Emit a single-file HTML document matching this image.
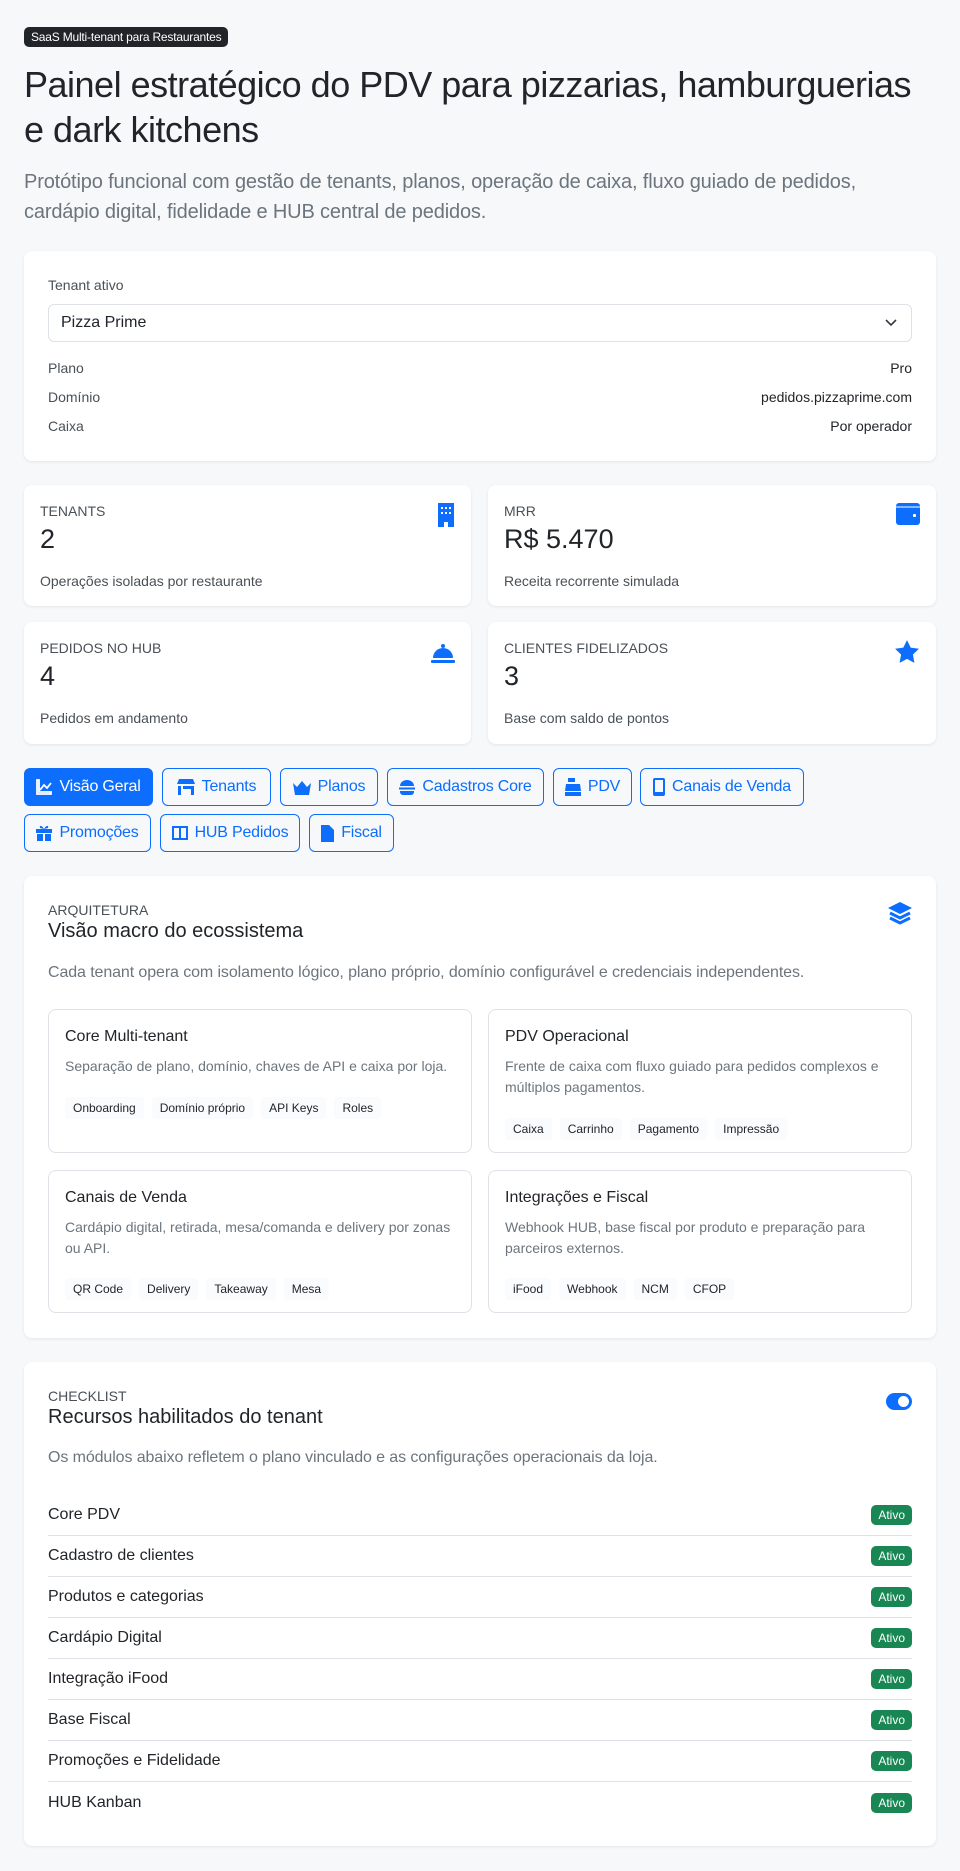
<!DOCTYPE html>
<html><head><meta charset="utf-8"><style>
*{box-sizing:border-box;margin:0;padding:0}
body{width:960px;height:1871px;background:#f6f8fa;font-family:"Liberation Sans",sans-serif;color:#212529;position:relative;overflow:hidden}
.abs{position:absolute}
.card{position:absolute;background:#fff;border-radius:8px;box-shadow:0 1px 3px rgba(0,0,0,.08)}
.badge{left:24px;top:27px;height:20px;padding:0 7px;background:#212529;color:#fff;font-size:12px;line-height:20px;border-radius:5px;letter-spacing:-.2px}
h1{position:absolute;left:24px;top:62px;font-size:36px;font-weight:400;line-height:45px;width:908px;letter-spacing:-.5px}
.lead{position:absolute;left:24px;top:167px;font-size:20px;line-height:30px;color:#6c757d;width:900px;letter-spacing:-.15px}
.lbl{font-size:14px;color:#495057}
.row{position:absolute;left:24px;right:24px;font-size:14px;display:flex;justify-content:space-between;color:#212529}
.row span:first-child{color:#495057}
.stat .t{position:absolute;left:16px;top:18px;font-size:14px;color:#495057}
.stat .v{position:absolute;left:16px;top:38px;font-size:27px;line-height:32px}
.stat .d{position:absolute;left:16px;top:88px;font-size:14px;color:#495057}
.stat svg{position:absolute;right:16px;top:18px}
.tab{position:absolute;height:38px;border:1px solid #0d6efd;border-radius:6px;color:#0d6efd;font-size:16px;line-height:36px;display:flex;align-items:center;justify-content:center;gap:7px;letter-spacing:-.2px}
.tab.on{background:#0d6efd;color:#fff}
.tab svg{fill:currentColor}
.sub{position:absolute;border:1px solid #dee2e6;border-radius:8px;background:#fff}
.sub h5{position:absolute;left:16px;top:18px;font-size:16px;font-weight:400}
.sub p{position:absolute;left:16px;top:46px;right:16px;font-size:14px;line-height:21px;color:#6c757d}
.chips{position:absolute;left:16px;display:flex;gap:8px}
.chips span{font-size:12px;background:#fafbfc;padding:2px 8px;line-height:18px;border-radius:4px}
.sec .k{position:absolute;left:24px;font-size:14px;color:#495057}
.sec .h{position:absolute;left:24px;font-size:20px}
.sec .p{position:absolute;left:24px;font-size:16px;color:#6c757d;letter-spacing:-.1px}
.li{position:absolute;left:24px;right:24px;height:41px;border-bottom:1px solid #dee2e6;display:flex;justify-content:space-between;align-items:center;font-size:16px}
.li b{font-weight:400;background:#198754;color:#fff;font-size:12px;padding:0 7px;line-height:20px;border-radius:5px}
</style></head><body>
<div class="abs badge">SaaS Multi-tenant para Restaurantes</div>
<h1>Painel estratégico do PDV para pizzarias, hamburguerias e dark kitchens</h1>
<div class="lead">Protótipo funcional com gestão de tenants, planos, operação de caixa, fluxo guiado de pedidos, cardápio digital, fidelidade e HUB central de pedidos.</div>

<div class="card" style="left:24px;top:251px;width:912px;height:210px">
 <div class="abs lbl" style="left:24px;top:26px">Tenant ativo</div>
 <div class="abs" style="left:24px;top:53px;width:864px;height:38px;border:1px solid #dee2e6;border-radius:6px;font-size:16px;line-height:36px;padding-left:12px">Pizza Prime
  <svg class="abs" style="right:14px;top:13px" width="12" height="10" viewBox="0 0 12 10"><path d="M1 2l5 5 5-5" fill="none" stroke="#343a40" stroke-width="1.6"/></svg></div>
 <div class="row" style="top:109px"><span>Plano</span><span>Pro</span></div>
 <div class="row" style="top:138px"><span>Domínio</span><span>pedidos.pizzaprime.com</span></div>
 <div class="row" style="top:167px"><span>Caixa</span><span>Por operador</span></div>
</div>

<div class="card stat" style="left:24px;top:485px;width:447px;height:121px"><div class="t">TENANTS</div><div class="v">2</div><div class="d">Operações isoladas por restaurante</div>
<svg width="18" height="24" viewBox="0 0 18 24"><path d="M1 0h16v24h-6v-5H7v5H1z" fill="#0d6efd"/><g fill="#fff"><rect x="4" y="4" width="2" height="2"/><rect x="8" y="4" width="2" height="2"/><rect x="12" y="4" width="2" height="2"/><rect x="4" y="9" width="2" height="2"/><rect x="8" y="9" width="2" height="2"/><rect x="12" y="9" width="2" height="2"/></g></svg></div>
<div class="card stat" style="left:488px;top:485px;width:448px;height:121px"><div class="t">MRR</div><div class="v">R$ 5.470</div><div class="d">Receita recorrente simulada</div>
<svg width="24" height="22" viewBox="0 0 24 22"><rect x="0" y="0" width="24" height="22" rx="3" fill="#0d6efd"/><path d="M0 4h24" stroke="#fff" stroke-width="1"/><rect x="17" y="11" width="3" height="3" rx="1" fill="#fff"/></svg></div>
<div class="card stat" style="left:24px;top:622px;width:447px;height:122px"><div class="t">PEDIDOS NO HUB</div><div class="v">4</div><div class="d">Pedidos em andamento</div>
<svg width="24" height="20" viewBox="0 0 24 20" style="top:22px"><circle cx="12" cy="2" r="2" fill="#0d6efd"/><path d="M2 14a10 10 0 0 1 20 0z" fill="#0d6efd"/><rect x="0" y="16" width="24" height="3" rx="1" fill="#0d6efd"/></svg></div>
<div class="card stat" style="left:488px;top:622px;width:448px;height:122px"><div class="t">CLIENTES FIDELIZADOS</div><div class="v">3</div><div class="d">Base com saldo de pontos</div>
<svg width="26" height="26" viewBox="0 0 24 24" style="top:17px"><path d="M12 1l3.4 7 7.6 1-5.5 5.3 1.3 7.7L12 18.3 5.2 22l1.3-7.7L1 9l7.6-1z" fill="#0d6efd"/></svg></div>

<div class="tab on" style="left:24px;top:768px;width:129px"><svg width="16" height="16" viewBox="0 0 16 16"><path d="M1 1h2v12h12v2H1z M4 11l4-5 3 3 4-5" stroke="currentColor" stroke-width="1.8" fill="none"/></svg>Visão Geral</div>
<div class="tab" style="left:162px;top:768px;width:109px"><svg width="18" height="16" viewBox="0 0 18 16"><path d="M2 0h14l2 5H0z M1 7h3v9H1z M6 7h11v9h-3V10H6z"/></svg>Tenants</div>
<div class="tab" style="left:280px;top:768px;width:98px"><svg width="18" height="15" viewBox="0 0 18 15"><path d="M0 3l4 4 5-6 5 6 4-4-2 12H2z"/></svg>Planos</div>
<div class="tab" style="left:387px;top:768px;width:157px"><svg width="16" height="15" viewBox="0 0 16 15"><path d="M1 6a7 6 0 0 1 14 0z M0 7.5h16v2H0z M1 11h14v1a3 3 0 0 1-3 3H4a3 3 0 0 1-3-3z"/></svg>Cadastros Core</div>
<div class="tab" style="left:553px;top:768px;width:79px"><svg width="16" height="18" viewBox="0 0 16 18"><path d="M3 0h7v4H3z M1 6h14l1 7H0z M0 14h16v4H0z"/></svg>PDV</div>
<div class="tab" style="left:640px;top:768px;width:164px"><svg width="12" height="18" viewBox="0 0 12 18"><path d="M2 0h8a2 2 0 0 1 2 2v14a2 2 0 0 1-2 2H2a2 2 0 0 1-2-2V2a2 2 0 0 1 2-2zM2 2v12h8V2z"/></svg>Canais de Venda</div>
<div class="tab" style="left:24px;top:814px;width:127px"><svg width="16" height="16" viewBox="0 0 16 16"><path d="M0 4h16v4H0z M1 9h6v7H1z M9 9h6v7H9z M8 4C6 0 3 0 4 3z M8 4c2-4 5-4 4-1z"/></svg>Promoções</div>
<div class="tab" style="left:160px;top:814px;width:140px"><svg width="16" height="14" viewBox="0 0 16 14"><path d="M0 0h16v14H0zM2 2v10h5V2zm7 0v10h5V2z"/></svg>HUB Pedidos</div>
<div class="tab" style="left:309px;top:814px;width:85px"><svg width="13" height="17" viewBox="0 0 13 17"><path d="M0 0h8l5 5v12H0z M3 9h7v1H3zM3 11h7v1H3zM3 13h7v1H3z"/></svg>Fiscal</div>

<div class="card sec" style="left:24px;top:876px;width:912px;height:462px">
 <div class="k" style="top:26px">ARQUITETURA</div>
 <div class="h" style="top:44px">Visão macro do ecossistema</div>
 <svg class="abs" style="right:24px;top:26px" width="24" height="26" viewBox="0 0 24 26"><path d="M12 0l12 6-12 6L0 6z" fill="#0d6efd"/><path d="M2 11l10 5 10-5M2 16l10 5 10-5" stroke="#0d6efd" stroke-width="3" fill="none"/></svg>
 <div class="p" style="top:88px">Cada tenant opera com isolamento lógico, plano próprio, domínio configurável e credenciais independentes.</div>
 <div class="sub" style="left:24px;top:133px;width:424px;height:144px"><h5>Core Multi-tenant</h5><p>Separação de plano, domínio, chaves de API e caixa por loja.</p><div class="chips" style="top:87px"><span>Onboarding</span><span>Domínio próprio</span><span>API Keys</span><span>Roles</span></div></div>
 <div class="sub" style="left:464px;top:133px;width:424px;height:144px"><h5>PDV Operacional</h5><p>Frente de caixa com fluxo guiado para pedidos complexos e múltiplos pagamentos.</p><div class="chips" style="top:108px"><span>Caixa</span><span>Carrinho</span><span>Pagamento</span><span>Impressão</span></div></div>
 <div class="sub" style="left:24px;top:294px;width:424px;height:143px"><h5>Canais de Venda</h5><p>Cardápio digital, retirada, mesa/comanda e delivery por zonas ou API.</p><div class="chips" style="top:107px"><span>QR Code</span><span>Delivery</span><span>Takeaway</span><span>Mesa</span></div></div>
 <div class="sub" style="left:464px;top:294px;width:424px;height:143px"><h5>Integrações e Fiscal</h5><p>Webhook HUB, base fiscal por produto e preparação para parceiros externos.</p><div class="chips" style="top:107px"><span>iFood</span><span>Webhook</span><span>NCM</span><span>CFOP</span></div></div>
</div>

<div class="card sec" style="left:24px;top:1362px;width:912px;height:484px">
 <div class="k" style="top:26px">CHECKLIST</div>
 <div class="h" style="top:44px">Recursos habilitados do tenant</div>
 <div class="abs" style="right:24px;top:31px;width:26px;height:17px;border-radius:9px;background:#0d6efd"><div class="abs" style="right:3px;top:3px;width:11px;height:11px;border-radius:50%;background:#fff"></div></div>
 <div class="p" style="top:87px">Os módulos abaixo refletem o plano vinculado e as configurações operacionais da loja.</div>
 <div class="li" style="top:133px"><span>Core PDV</span><b>Ativo</b></div>
 <div class="li" style="top:174px"><span>Cadastro de clientes</span><b>Ativo</b></div>
 <div class="li" style="top:215px"><span>Produtos e categorias</span><b>Ativo</b></div>
 <div class="li" style="top:256px"><span>Cardápio Digital</span><b>Ativo</b></div>
 <div class="li" style="top:297px"><span>Integração iFood</span><b>Ativo</b></div>
 <div class="li" style="top:338px"><span>Base Fiscal</span><b>Ativo</b></div>
 <div class="li" style="top:379px"><span>Promoções e Fidelidade</span><b>Ativo</b></div>
 <div class="li" style="top:420px;border:0"><span>HUB Kanban</span><b>Ativo</b></div>
</div>
</body></html>
